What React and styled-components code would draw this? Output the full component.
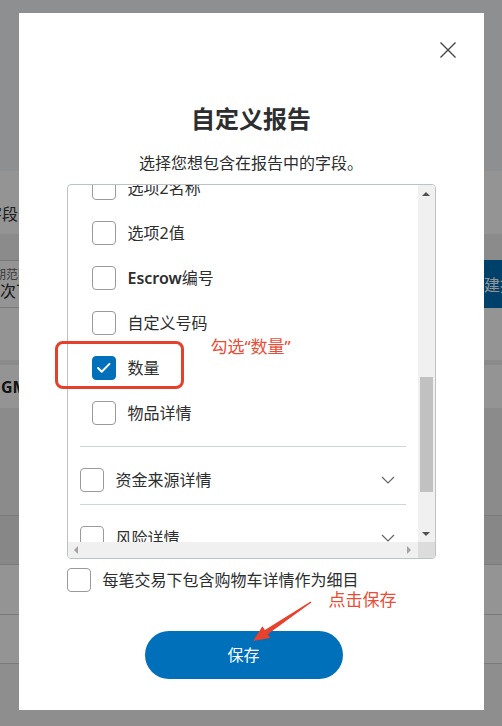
import React, { useLayoutEffect, useRef } from "react";
import styled, { createGlobalStyle } from "styled-components";

const FONT = `"Noto Sans", "Noto Sans CJK SC", sans-serif`;

const Global = createGlobalStyle`
  html, body { margin: 0; padding: 0; }
  body {
    width: 502px;
    height: 726px;
    overflow: hidden;
    font-family: ${FONT};
    background: #fff;
  }
  * { box-sizing: border-box; }
`;

const Stage = styled.div`
  position: relative;
  width: 502px;
  height: 726px;
  overflow: hidden;
`;

/* ---------- background page (dimmed) ---------- */
const BgPage = styled.div`
  display: flex;
  flex-direction: column;
  height: 100%;
  color: #333;
`;

const BgRow = styled.div`
  flex: none;
  display: flex;
  align-items: ${(p) => p.$align || "center"};
  justify-content: space-between;
  height: ${(p) => p.$h}px;
  padding-top: ${(p) => p.$pt || 0}px;
  background: ${(p) => p.$bg || "#fff"};
  border-top: ${(p) => (p.$top ? "1px solid #d4d4d4" : "none")};
  border-bottom: ${(p) => (p.$bottom ? "1px solid #d4d4d4" : "none")};
`;

const EdgeCell = styled.div`
  width: 18px;
  display: flex;
  justify-content: flex-end;
  white-space: nowrap;
  font-size: 16px;
  line-height: 24px;
`;

const InputBox = styled.div`
  align-self: stretch;
  width: 160px;
  border-top: 1px solid #cfcfcf;
  border-bottom: 1px solid #cfcfcf;
  display: flex;
  flex-direction: column;
  padding-top: 6px;
  white-space: nowrap;
`;

const InputLabel = styled.span`
  font-size: 12px;
  line-height: 16px;
  color: #666;
  margin-left: -6px;
`;

const InputValue = styled.span`
  font-size: 16px;
  line-height: 17px;
  color: #2c2e2f;
`;

const CreateButton = styled.div`
  align-self: stretch;
  display: flex;
  align-items: center;
  padding: 0 20px 0 18px;
  margin-right: -50px;
  background: #0070ba;
  color: #fff;
  font-size: 16px;
  white-space: nowrap;
`;

const BoldEdge = styled.span`
  padding-left: 1px;
  font-size: 16px;
  font-weight: 700;
  color: #222;
  white-space: nowrap;
`;

/* ---------- overlay + modal ---------- */
const Overlay = styled.div`
  position: absolute;
  inset: 0;
  background: rgba(0, 0, 0, 0.42);
  display: flex;
  justify-content: center;
  align-items: flex-start;
  padding-top: 13px;
`;

const Modal = styled.div`
  position: relative;
  width: 465px;
  height: 697px;
  background: #fff;
  display: flex;
  flex-direction: column;
  align-items: center;
  padding-top: 29px;
  color: #2c2e2f;
`;

const CloseRow = styled.div`
  align-self: stretch;
  display: flex;
  justify-content: flex-end;
  padding-right: 28px;
  height: 16px;
`;

const Title = styled.h2`
  margin: 45px 0 0;
  font-size: 24px;
  font-weight: 700;
  line-height: 32px;
  color: #2c2e2f;
`;

const Subtitle = styled.p`
  margin: 16px 0 0;
  font-size: 16px;
  line-height: 24px;
  color: #2c2e2f;
`;

const ScrollBox = styled.div`
  margin-top: 9px;
  width: 369px;
  height: 375px;
  flex: none;
  border: 1px solid #bcc3c7;
  border-radius: 4px;
  display: grid;
  grid-template-columns: 1fr 17px;
  grid-template-rows: 1fr 16px;
  overflow: hidden;
`;

const Viewport = styled.div`
  position: relative;
  overflow: hidden;
`;

const VBar = styled.div`
  background: #f0f0f0;
  display: flex;
  flex-direction: column;
`;

const ArrowBtn = styled.div`
  flex: none;
  width: ${(p) => (p.$w ? p.$w + "px" : "auto")};
  height: 17px;
  display: flex;
  align-items: center;
  justify-content: center;
`;

const Track = styled.div`
  flex: 1;
  padding: 0 2px;
`;

const Thumb = styled.div`
  margin-top: ${(p) => p.$top}px;
  height: ${(p) => p.$h}px;
  background: #c1c1c1;
`;

const HBar = styled.div`
  background: #f0f0f0;
  display: flex;
  justify-content: space-between;
  align-items: center;
`;

const Corner = styled.div`
  background: #dcdcdc;
`;

const Tri = styled.span`
  width: 0;
  height: 0;
  ${(p) =>
    p.$dir === "up"
      ? `border-left: 4px solid transparent; border-right: 4px solid transparent; border-bottom: 4px solid ${p.$c};`
      : p.$dir === "down"
      ? `border-left: 4px solid transparent; border-right: 4px solid transparent; border-top: 4px solid ${p.$c};`
      : p.$dir === "left"
      ? `border-top: 4px solid transparent; border-bottom: 4px solid transparent; border-right: 4px solid ${p.$c};`
      : `border-top: 4px solid transparent; border-bottom: 4px solid transparent; border-left: 4px solid ${p.$c};`}
`;

const SectionRow = styled.div`
  display: flex;
  align-items: center;
  gap: 12px;
  padding: 21px 23px 12px 12px;
`;

const Label = styled.span`
  flex: ${(p) => (p.$grow ? 1 : "none")};
  font-size: 16px;
  line-height: 24px;
  color: #2c2e2f;
  white-space: nowrap;
`;

const Latin = styled.span`
  font-weight: 600;
`;

const ItemList = styled.div`
  padding-bottom: 11px;
`;

const Item = styled.div`
  display: flex;
  align-items: center;
  gap: 12px;
  height: 45px;
  padding-left: 24px;
`;

const Divider = styled.div`
  height: 1px;
  background: #cfd6da;
  margin: 0 12px;
`;

const Box = styled.span`
  flex: none;
  width: 24px;
  height: 24px;
  border-radius: 4px;
  border: 1px solid ${(p) => (p.$checked ? "#0070ba" : "#9a9a9a")};
  background: ${(p) => (p.$checked ? "#0070ba" : "#fff")};
  display: flex;
  align-items: center;
  justify-content: center;
`;

const BottomRow = styled.label`
  margin-top: 9px;
  align-self: stretch;
  padding-left: 48px;
  display: flex;
  align-items: center;
  gap: 12px;
  height: 24px;
`;

const SaveButton = styled.button`
  margin-top: 39px;
  align-self: flex-start;
  margin-left: 126px;
  width: 198px;
  height: 48px;
  border: none;
  border-radius: 24px;
  background: #0070ba;
  color: #fff;
  font-family: ${FONT};
  font-size: 16px;
  line-height: 24px;
  padding: 0;
`;

/* ---------- annotations ---------- */
const RedFrame = styled.div`
  position: absolute;
  left: 36px;
  top: 328px;
  width: 129px;
  height: 48px;
  border: 3px solid #e4402b;
  border-radius: 8px;
  pointer-events: none;
`;

const Note = styled.div`
  position: absolute;
  left: ${(p) => p.$x}px;
  top: ${(p) => p.$y}px;
  color: #ea4d36;
  font-size: 17px;
  line-height: 26px;
  white-space: nowrap;
  pointer-events: none;
`;

const ArrowSvg = styled.svg`
  position: absolute;
  left: 227px;
  top: 582px;
  pointer-events: none;
`;

function Checkbox({ checked }) {
  return (
    <Box $checked={checked}>
      {checked && (
        <svg width="24" height="24" viewBox="0 0 24 24">
          <path d="M5.5 12 L9.5 16 L18 7.5" fill="none" stroke="#fff" strokeWidth="2.2" strokeLinecap="round" strokeLinejoin="round" />
        </svg>
      )}
    </Box>
  );
}

function Chevron({ up }) {
  return (
    <svg width="14" height="8" viewBox="0 0 14 8">
      <path d={up ? "M1 7 L7 1 L13 7" : "M1 1 L7 7 L13 1"} fill="none" stroke="#666" strokeWidth="1.2" />
    </svg>
  );
}

function renderLabel(text) {
  if (text.startsWith("Escrow")) {
    return (
      <>
        <Latin>Escrow</Latin>
        {text.slice(6)}
      </>
    );
  }
  return text;
}

const txItems = [
  "日期", "时间", "时区", "名称", "类型", "状态", "币种", "总额", "费用", "净额",
  "交易号", "选项1名称", "选项1值", "选项2名称", "选项2值", "Escrow编号", "自定义号码", "数量", "物品详情",
];

const otherSections = ["资金来源详情", "风险详情", "发票详情", "客户详情"];

export default function App() {
  const vpRef = useRef(null);
  const anchorRef = useRef(null);

  useLayoutEffect(() => {
    if (vpRef.current && anchorRef.current) {
      vpRef.current.scrollTop = anchorRef.current.offsetTop + 20;
    }
  }, []);

  return (
    <Stage>
      <Global />
      <BgPage>
        <BgRow $h={171} $bg="#f5f7f9" />
        <BgRow $h={63} $align="flex-start" $pt={31}>
          <EdgeCell>
            <span>选择字段</span>
          </EdgeCell>
        </BgRow>
        <BgRow $h={26} $bg="#eff0f1" />
        <BgRow $h={48}>
          <InputBox>
            <InputLabel>期范围</InputLabel>
            <InputValue>次下载</InputValue>
          </InputBox>
          <CreateButton>创建报告</CreateButton>
        </BgRow>
        <BgRow $h={52} />
        <BgRow $h={5} $bg="#f0f0f0" />
        <BgRow $h={43}>
          <BoldEdge>GMT+08:00</BoldEdge>
        </BgRow>
        <BgRow $h={107} $bg="#f0f0f0" />
        <BgRow $h={50} $bg="#e8e8e8" $top $bottom />
        <BgRow $h={50} $bottom />
        <BgRow $h={49} $bottom />
        <BgRow $h={63} $bg="#f4f4f4" />
      </BgPage>

      <Overlay>
        <Modal>
          <CloseRow>
            <svg width="16" height="16" viewBox="0 0 16 16">
              <path d="M0.5 0.5 L15.5 15.5 M15.5 0.5 L0.5 15.5" stroke="#444" strokeWidth="1.4" fill="none" />
            </svg>
          </CloseRow>
          <Title>自定义报告</Title>
          <Subtitle>选择您想包含在报告中的字段。</Subtitle>

          <ScrollBox>
            <Viewport ref={vpRef}>
              <SectionRow>
                <Checkbox />
                <Label $grow>交易详情</Label>
                <Chevron up />
              </SectionRow>
              <ItemList>
                {txItems.map((t) => (
                  <Item key={t} ref={t === "选项2名称" ? anchorRef : undefined}>
                    <Checkbox checked={t === "数量"} />
                    <Label>{renderLabel(t)}</Label>
                  </Item>
                ))}
              </ItemList>
              {otherSections.map((s) => (
                <React.Fragment key={s}>
                  <Divider />
                  <SectionRow>
                    <Checkbox />
                    <Label $grow>{s}</Label>
                    <Chevron />
                  </SectionRow>
                </React.Fragment>
              ))}
            </Viewport>
            <VBar>
              <ArrowBtn>
                <Tri $dir="up" $c="#505050" />
              </ArrowBtn>
              <Track>
                <Thumb $top={175} $h={115} />
              </Track>
              <ArrowBtn>
                <Tri $dir="down" $c="#505050" />
              </ArrowBtn>
            </VBar>
            <HBar>
              <ArrowBtn $w={17}>
                <Tri $dir="left" $c="#a3a3a3" />
              </ArrowBtn>
              <ArrowBtn $w={17}>
                <Tri $dir="right" $c="#a3a3a3" />
              </ArrowBtn>
            </HBar>
            <Corner />
          </ScrollBox>

          <BottomRow>
            <Checkbox />
            <Label>每笔交易下包含购物车详情作为细目</Label>
          </BottomRow>

          <SaveButton>保存</SaveButton>

          <RedFrame />
          <Note $x={192} $y={321}>勾选“数量”</Note>
          <Note $x={310} $y={574}>点击保存</Note>
          <ArrowSvg width="70" height="50" viewBox="245 595 70 50">
            <polygon
              points="310.4,602.5 266.7,634.2 269.2,637.9 252,641 261.4,626.3 263.9,630 309.6,601.5"
              fill="#e8412c"
            />
          </ArrowSvg>
        </Modal>
      </Overlay>
    </Stage>
  );
}
